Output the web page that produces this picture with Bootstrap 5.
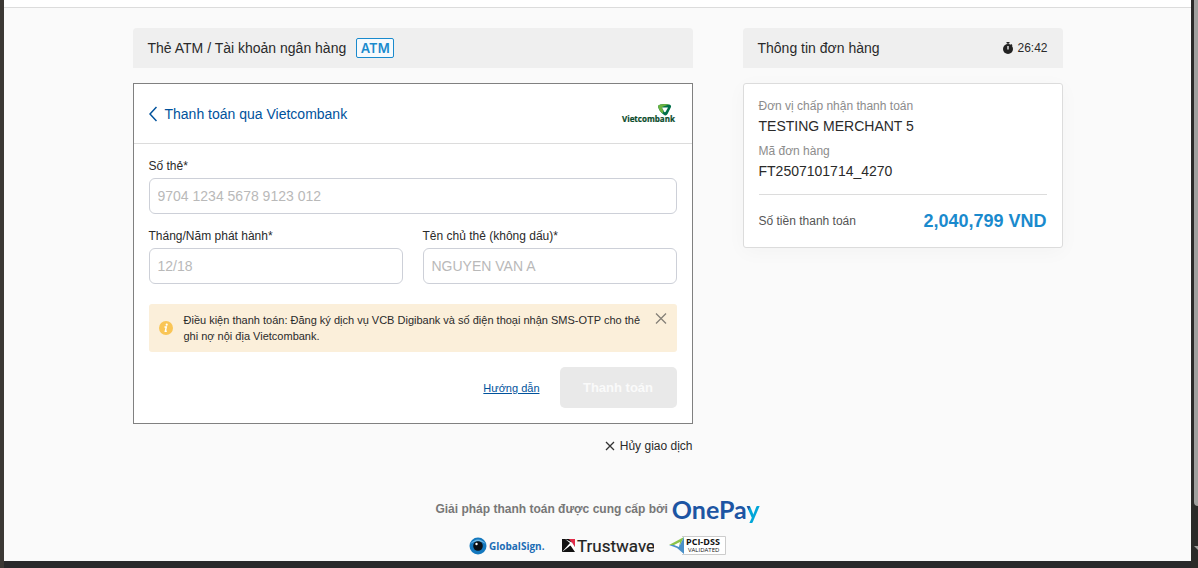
<!DOCTYPE html>
<html lang="vi">
<head>
<meta charset="utf-8">
<meta name="viewport" content="width=device-width, initial-scale=1">
<title>OnePay</title>
<link href="https://cdn.jsdelivr.net/npm/bootstrap@5.3.0/dist/css/bootstrap.min.css" rel="stylesheet">
<style>
body { font-family: "Liberation Sans", Arial, sans-serif; font-size: 14px; line-height: 20px; color: #2a2a2a; background: #29292b; }
.window-shell { min-height: 100vh; }
.edge-left { width: 4px; background: #3b3834; }
.page-area { background: #fafafa; margin-bottom: 7px; min-width: 0; }
.top-strip { height: 8px; background: #fff; border-bottom: 1px solid #dcdcdc; }
.scroll-track { width: 7px; padding-left: 3px; background: #2b2b29; }
.scroll-thumb { height: 89%; background: #a0a09e; border-bottom-left-radius: 4px; }
.scroll-arrow { width: 0; margin-top: 40px; border-top: 4px solid #a0a09e; border-left: 4px solid transparent; }
.pay-wrap { max-width: 930px; gap: 50px; margin-top: 20px; }
.order-col { width: 320px; }
.section-head { height: 40px; padding: 0 15px; background: #efefef; border-radius: 4px 4px 0 0; margin-bottom: 15px; }
.section-head h2 { font-size: 14px; line-height: 20px; font-weight: 400; margin: 0; }
.atm-tag { height: 20px; width: 38px; margin-left: 10px; border: 1px solid #1a8acd; border-radius: 2px; background: #f6fafd; color: #1a8acd; font: 600 13px/20px Inter, sans-serif; }
.timer { font-size: 12px; }
.pay-box { background: #fff; border: 1px solid #808080; }
.pay-box-head { height: 60px; padding: 0 15px; border-bottom: 1px solid #dcdcdc; }
.blue-link { color: #00529c; }
.guide-link { font-size: 11px; margin-right: 20px; }
.pay-form { padding: 12px 15px 15px; }
.pay-form label { font-size: 12px; line-height: 20px; margin-bottom: 2px; }
.pay-form .form-control { height: 36px; padding: 0 8px; font-size: 14px; border: 1px solid #cdd0d8; border-radius: 6px; box-shadow: none; }
.pay-form .form-control::placeholder { color: #b9b9b9; opacity: 1; }
.fields { display: grid; grid-template-columns: 1fr 1fr; gap: 12px 20px; }
.field-wide { grid-column: 1 / -1; }
.notice { background: #fbefda; border-radius: 3px; margin: 20px 0 15px; padding: 8px 10px; gap: 11px; font-size: 11px; line-height: 16px; }
.plain-btn { border: 0; padding: 0; background: none; color: inherit; }
.pay-btn, .pay-btn:disabled { width: 117px; height: 41px; border: 0; border-radius: 5px; background: #e9e9e9; color: #fafafa; opacity: 1; font-size: 13px; font-weight: 700; padding: 0; }
.small-txt { font-size: 12px; }
.cancel-row { margin-top: 12px; }
.cancel-row .plain-btn { gap: 5px; }
.vcb-logo { width: 56px; height: 22px; }
.order-box { background: #fff; border: 1px solid #dcdcdc; border-radius: 3px; padding: 12px 15px 13px; box-shadow: 0 4px 20px rgba(0,0,0,.03); }
.order-box dt { font-size: 12px; font-weight: 400; color: #8c8c8c; }
.order-box dd { margin-bottom: 5px; }
.order-total { border-top: 1px solid #dcdcdc; padding-top: 13px; margin-top: 13px; color: #555; }
.amount { color: #1a8acd; font-size: 18px; line-height: 26px; font-weight: 700; }
.site-foot { margin-top: 38px; }
.provided { color: #777; font-size: 12px; font-weight: 700; }
.onepay { font: 700 25px/30px Lato, sans-serif; color: #1d55a3; }
.onepay-y { background: linear-gradient(115deg, #1d55a3 35%, #00a6d8 35%); -webkit-background-clip: text; background-clip: text; color: transparent; }
.seals { gap: 15px; margin-top: 12px; }
@media (max-width: 900px) { .pay-wrap { flex-direction: column; gap: 20px; padding: 0 12px; } .order-col { width: 100%; } }
</style>
</head>
<body>
<div class="window-shell d-flex">
  <div class="edge-left flex-shrink-0"></div>
  <div class="page-area flex-grow-1">
    <div class="top-strip"></div>
    <main class="pay-wrap d-flex mx-auto">
      <div class="flex-grow-1">
        <div class="section-head d-flex align-items-center">
          <h2>Thẻ ATM / Tài khoản ngân hàng</h2>
          <span class="atm-tag d-flex align-items-center justify-content-center">ATM</span>
        </div>
        <section class="pay-box">
          <div class="pay-box-head d-flex align-items-center justify-content-between">
            <a href="#" class="blue-link text-decoration-none d-flex align-items-center">
              <svg width="8" height="16" viewBox="0 0 8 16" class="me-2" fill="none" stroke="#00529c" stroke-width="1.5" aria-hidden="true"><path d="M7.500 1 1 8l6.500 7"/></svg>
              <span>Thanh toán qua Vietcombank</span>
            </a>
            <svg class="vcb-logo" viewBox="0 0 56 22" role="img" aria-label="Vietcombank">
              <path d="M37 3.500q0-1.500 2.500-2Q44 .5 48 1.500q2.500.5 2 2.500l-3.500 7q-1.500 2.500-4 .5Q38 8 37 3.500Z" fill="#00704a"/>
              <path d="M37 3.500q0-1.500 2.500-2Q44 .5 48 1.500L41 4l1.500 4.500-1 2Q38 8 37 3.500Z" fill="#6cb33f"/>
              <path d="M41 4.500h6L44.500 9q-1 .5-1.500-.5Z" fill="#fff"/>
              <text x="1" y="19" font-family="Open Sans, sans-serif" font-weight="700" font-size="8" fill="#0a4a2a" stroke="#0a4a2a" stroke-width=".2">Vietcombank</text>
            </svg>
          </div>
          <form class="pay-form">
            <div class="fields">
              <div class="field-wide">
                <label class="d-block" for="cardNo">Số thẻ*</label>
                <input class="form-control" id="cardNo" placeholder="9704 1234 5678 9123 012">
              </div>
              <div>
                <label class="d-block" for="issued">Tháng/Năm phát hành*</label>
                <input class="form-control" id="issued" placeholder="12/18">
              </div>
              <div>
                <label class="d-block" for="holder">Tên chủ thẻ (không dấu)*</label>
                <input class="form-control" id="holder" placeholder="NGUYEN VAN A">
              </div>
            </div>
            <div class="notice d-flex">
              <svg width="14" height="14" viewBox="0 0 14 14" class="flex-shrink-0 align-self-center" aria-hidden="true"><circle cx="7" cy="7" r="7" fill="#f9c556"/><circle cx="7.700" cy="3.700" r="1.100" fill="#fff"/><path d="M5.500 6h1.800l-1 4.300h1.500" fill="none" stroke="#fff" stroke-width="1.400"/></svg>
              <div class="flex-grow-1">Điều kiện thanh toán: Đăng ký dịch vụ VCB Digibank và số điện thoại nhận SMS-OTP cho thẻ ghi nợ nội địa Vietcombank.</div>
              <button type="button" class="plain-btn flex-shrink-0 align-self-start d-flex" aria-label="Đóng"><svg width="12" height="13" viewBox="0 0 12 13" stroke="#858078" stroke-width="1.300"><path d="m1 1.500 10 10m0-10-10 10"/></svg></button>
            </div>
            <div class="d-flex justify-content-end align-items-center">
              <a href="#" class="blue-link guide-link">Hướng dẫn</a>
              <button type="submit" class="btn pay-btn" disabled>Thanh toán</button>
            </div>
          </form>
        </section>
        <div class="cancel-row d-flex justify-content-end">
          <button type="button" class="plain-btn small-txt d-flex align-items-center"><svg width="10" height="10" viewBox="0 0 10 10" stroke="#333" stroke-width="1.300" aria-hidden="true"><path d="m1 1 8 8m0-8-8 8"/></svg><span>Hủy giao dịch</span></button>
        </div>
      </div>
      <aside class="order-col flex-shrink-0">
        <div class="section-head d-flex align-items-center justify-content-between">
          <h2>Thông tin đơn hàng</h2>
          <span class="timer d-flex align-items-center"><svg width="10" height="12" viewBox="0 0 10 12" class="me-1" aria-hidden="true"><path d="M3.500 0h3v1.200h-3ZM4.400 1h1.200v1.500H4.400ZM8.300 2l1.200 1.200-1 1-1.200-1.200Z" fill="#222"/><circle cx="5" cy="7" r="5" fill="#222"/><path d="M5 4v3.500" stroke="#fff" stroke-width="1.300"/></svg>26:42</span>
        </div>
        <div class="order-box">
          <dl class="mb-0">
            <dt>Đơn vị chấp nhận thanh toán</dt>
            <dd>TESTING MERCHANT 5</dd>
            <dt>Mã đơn hàng</dt>
            <dd>FT2507101714_4270</dd>
          </dl>
          <div class="order-total d-flex justify-content-between align-items-center">
            <span class="small-txt">Số tiền thanh toán</span>
            <span class="amount">2,040,799 VND</span>
          </div>
        </div>
      </aside>
    </main>
    <footer class="site-foot">
      <div class="d-flex justify-content-center align-items-center">
        <span class="provided me-1">Giải pháp thanh toán được cung cấp bởi</span>
        <span class="onepay">OnePa<span class="onepay-y">y</span></span>
      </div>
      <div class="seals d-flex justify-content-center align-items-center">
        <svg width="78" height="20" viewBox="0 0 78 20" role="img" aria-label="GlobalSign">
          <circle cx="9" cy="10" r="8.500" fill="#1478be"/><path d="M1 8Q9-1 17 8 11 4 5 6Z" fill="#6fb7e3"/><circle cx="9" cy="10" r="4.800" fill="#0b1015"/><circle cx="7.500" cy="8" r="1.200" fill="#fff"/>
          <text x="20" y="14" font-family="Open Sans, sans-serif" font-weight="700" font-size="10" fill="#1c6db5">GlobalSign.</text>
        </svg>
        <svg width="92" height="20" viewBox="0 0 92 20" role="img" aria-label="Trustwave">
          <path d="M0 3h13v13H0Z" fill="#111"/><path d="M7 3h6v8Z" fill="#e22b49"/><path d="M0 16 8 7 3 3l7 3.500L13 11v5L8.500 9.500Z" fill="#fff"/><path d="M4 16 8 10l3 6Z" fill="#111"/>
          <text x="15" y="16" font-family="Roboto, sans-serif" font-size="17" fill="#222" stroke="#222" stroke-width=".2">Trustwave</text><circle cx="91" cy="8" r=".6" fill="#333"/>
        </svg>
        <svg width="58" height="20" viewBox="0 0 58 20" role="img" aria-label="PCI-DSS Validated">
          <path d="M13 .5h43.500v18H13" fill="#fff" stroke="#ccc"/>
          <path d="M0 9 15 1l-4 8Z" fill="#8bc34a"/><path d="M0 9h11l4-8v17L8 12Z" fill="#4a90c8"/><path d="m5 9 6-3-1 5Z" fill="#fff"/>
          <text x="17" y="9" font-family="Open Sans, sans-serif" font-weight="700" font-size="9" fill="#111">PCI-DSS</text>
          <text x="19" y="16" font-family="Open Sans, sans-serif" font-size="6" fill="#111">VALIDATED</text>
        </svg>
      </div>
    </footer>
  </div>
  <div class="scroll-track flex-shrink-0"><div class="scroll-thumb"></div><div class="scroll-arrow"></div></div>
</div>
<script src="https://cdn.jsdelivr.net/npm/bootstrap@5.3.0/dist/js/bootstrap.bundle.min.js"></script>
</body>
</html>
